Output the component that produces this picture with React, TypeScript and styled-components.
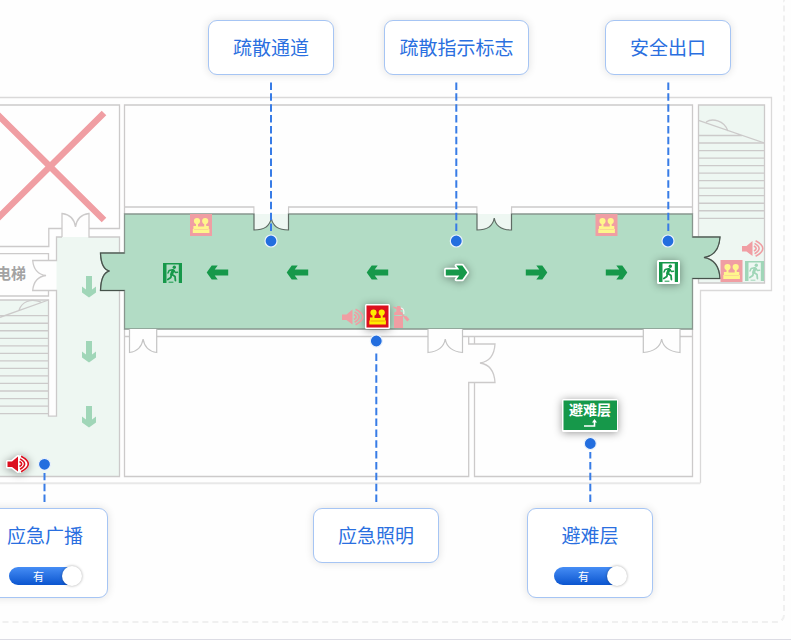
import React, { useState } from "react";
import styled, { createGlobalStyle, css } from "styled-components";

const GlobalStyle = createGlobalStyle`
  *, *::before, *::after { box-sizing: border-box; }
  body {
    margin: 0;
    background: #fefefe;
    font-family: "Noto Sans CJK SC", "Liberation Sans", sans-serif;
  }
`;

const BLUE = "#2a6fe0";
const GREEN = "#16984a";
const WALL = "#cccaca";
const PALE = "#eef7f2";
const PINK = "#f09ea3";
const LEMON = "#fff68c";

const Page = styled.div`
  display: flex;
  flex-direction: column;
  min-height: 100vh;
  overflow: hidden;
  border-bottom: 1px solid #dcdce4;
`;

const Board = styled.main`
  position: relative;
  flex: 1;
  margin: 0 6px 16px 0;
  border: 2px dashed #f0f0f0;
  border-top: none;
  border-left: none;
  border-bottom-right-radius: 8px;
`;

const Plan = styled.svg`
  display: block;
  overflow: visible;
  font-family: "Noto Sans CJK SC", sans-serif;
  font-weight: 700;
`;

const Lifted = styled.g`
  filter: drop-shadow(0 1px 4px rgba(0, 0, 0, 0.4));
`;

const Callout = styled.section<{ $x: number; $y: number; $wide?: boolean }>`
  position: absolute;
  left: ${(p) => p.$x}px;
  top: ${(p) => p.$y}px;
  width: ${(p) => (p.$wide ? 145 : 126)}px;
  display: flex;
  flex-direction: column;
  align-items: center;
  gap: 17px;
  padding: 11px 0 12px;
  border: 1px solid #a6c5f4;
  border-radius: 9px;
  background: #fff;
  box-shadow: 0 0 8px rgba(0, 0, 0, 0.12);
`;

const CalloutTitle = styled.h2`
  margin: 0;
  color: ${BLUE};
  font-size: 19px;
  font-weight: 400;
  line-height: 30px;
  white-space: nowrap;
`;

const Switch = styled.label<{ $on: boolean }>`
  position: relative;
  display: flex;
  align-items: center;
  width: 72px;
  height: 18px;
  padding: 0 24px;
  border-radius: 9px;
  background: linear-gradient(#468df5, #0b55cf);
  color: #fff;
  font-size: 11px;
  line-height: 18px;
  cursor: pointer;
  ${(p) =>
    !p.$on &&
    css`
      justify-content: flex-end;
      background: #b8bfca;
    `}
`;

const SwitchInput = styled.input`
  position: absolute;
  inset: 0;
  width: 100%;
  height: 100%;
  margin: 0;
  opacity: 0;
  cursor: pointer;
`;

const Knob = styled.span<{ $on: boolean }>`
  position: absolute;
  top: -1px;
  ${(p) => (p.$on ? "right: -1px;" : "left: -1px;")}
  width: 20px;
  height: 20px;
  border-radius: 50%;
  background: #fff;
  box-shadow: 0 0 3px rgba(0, 0, 0, 0.35);
  pointer-events: none;
`;

function Toggle({ label }: { label: string }) {
  const [on, setOn] = useState(true);
  return (
    <Switch $on={on}>
      <SwitchInput
        type="checkbox"
        aria-label={label}
        checked={on}
        onChange={(e) => setOn(e.target.checked)}
      />
      {on ? "有" : "无"}
      <Knob $on={on} />
    </Switch>
  );
}

/* Points left, with its tip at the origin. */
const ARROW = "M0 0L5-7H11L8-3H21.5V3H8L11 7H5Z";

function Arrow({ x, y = 272.5, turn = 0, fill = GREEN }: { x: number; y?: number; turn?: number; fill?: string }) {
  return <path d={ARROW} fill={fill} transform={`translate(${x} ${y}) rotate(${turn})`} />;
}

function Lamp({ x, y, bg = PINK, fg = LEMON }: { x: number; y: number; bg?: string; fg?: string }) {
  return (
    <g transform={`translate(${x} ${y})`}>
      <rect width="22" height="22" fill={bg} />
      <g fill={fg}>
        <circle cx="7" cy="7" r="3.1" />
        <circle cx="15.2" cy="7" r="3.1" />
        <path d="M6 9H8V12.5H14.2V9H16.2V12H18.8V15H19.4V19H2.8V15H3.4V12H6Z" />
      </g>
      <path d="M4 15.5H18.4" stroke={bg} strokeWidth="0.5" fill="none" opacity="0.7" />
    </g>
  );
}

function Speaker({ x, y, color = PINK }: { x: number; y: number; color?: string }) {
  return (
    <g transform={`translate(${x} ${y})`}>
      <path d="M0 6H4.5L10.5 1V16L4.5 11.5H0Z" fill={color} />
      <g fill="none" stroke={color} strokeWidth="1.6">
        <path d="M12 6Q16.4 8.5 12 11" />
        <path d="M12.6 3.4Q21.6 8.5 12.6 13.7" />
        <path d="M13.6 .8Q28 8.5 13.6 16.3" />
      </g>
    </g>
  );
}

function ExitSign({ x, y, color = GREEN }: { x: number; y: number; color?: string }) {
  return (
    <g transform={`translate(${x} ${y})`}>
      <path fill={color} d="M0 0H19V20H15.8V1.4H3.5V20H0Z" />
      <circle cx="11.3" cy="4.2" r="1.7" fill={color} />
      <g fill="none" stroke={color} strokeLinejoin="round" strokeLinecap="round">
        <path strokeWidth="3" d="M10 7.6L8.6 11.2" />
        <path strokeWidth="1.5" d="M9.5 6.8L6.2 7.4L5 10M10.8 7.2L12.4 9.6L14.6 9.2" />
        <path strokeWidth="1.8" d="M9 11.5L12 13.5L12.4 17.5M8.4 11.4L7.8 14.6L4.8 16.6" />
        <path strokeWidth="1" d="M6 19.2H10" />
      </g>
    </g>
  );
}

function Extinguisher({ x, y }: { x: number; y: number }) {
  return (
    <g transform={`translate(${x} ${y})`}>
      <path fill={PINK} d="M1 8Q1 5.6 3.4 5.4V3.2L0 1.6L.4 .6L4 1.6V0H7.4V2H10V4H7.4V5.4Q10 5.6 10 8V9H1Z" />
      <path fill={PINK} d="M1 10H10V22H1Z" />
      <path fill="none" stroke={PINK} strokeWidth="1.3" d="M9 8.5L13 12" />
      <path stroke={PINK} strokeWidth="3" d="M12 10.8L15.4 14.6" />
      <path fill="none" stroke={PALE} strokeWidth="1.2" d="M8 2.2Q11.4 2.4 10.8 8" />
    </g>
  );
}

function Treads({ x1, x2, y, count }: { x1: number; x2: number; y: number; count: number }) {
  return (
    <>
      {Array.from({ length: count }, (_, i) => (
        <path key={i} d={`M${x1} ${y + i * 7.53}H${x2}`} />
      ))}
    </>
  );
}

const upperDoor = (l: number, r: number) => {
  const c = (l + r) / 2;
  return `M${l} 214V230Q${c - 2} 230 ${c} 218Q${c + 2} 230 ${r} 230V214`;
};
const lowerDoor = (l: number, r: number) => {
  const c = (l + r) / 2;
  return `M${l} 329V352.5Q${c - 2} 351 ${c} 339Q${c + 2} 351 ${r} 352.5V329`;
};

const HALL =
  "M124.5 214H692.5V237H720Q719 255 704 257.5Q719 260 720 278.5H692.5V329H124.5V290.5H100.5Q101 273 109.5 271Q101 269 100.5 253H124.5Z";

function FloorPlan() {
  return (
    <Plan width="780" height="510" viewBox="0 0 780 510" role="img" aria-label="楼层疏散平面图">
      <path fill={PALE} d="M56.5 237H119.5V476.5H0V300H48.5V416.5H56.5ZM698.5 105H764.5V283H698.5Z" />
      <g fill="none" stroke="#dad9d9" strokeWidth="1.3">
        <path d="M0 97.5H771.5V290.5H700.5V483" />
        <path d="M700.5 483.2H0" stroke="#e8e8e8" strokeWidth="2" />
      </g>
      <g fill="none" stroke={WALL} strokeWidth="1.3">
        <path d="M0 105H119.5V228.5H89M62 228.5H48.8V246.5H0" />
        <path d="M62 237H56.5V260.5H32.7Q34 274 46 275.5Q34 277 32.7 290.5H56.5V416.2H48.5V300H0" />
        <path d="M62 237V213.5Q74 215 75.5 227Q77 215 89 213.5V237H119.5V476.5H0" />
        <path d="M0 253.7H48.5V260.5M48.5 290.5V296H0" />
        <path d="M0 317.3L48.5 300M19 310C22 302 30 298 41 302" />
        <Treads x1={0} x2={48.5} y={315.7} count={14} />
        <path d="M124.5 214V105H692.5V214M124.5 207H254V214M288.5 214V207H477V214M511.5 214V207H692.5" />
        <path d="M124.5 329V476.5H468.7V382.5H495Q494 365 480 363Q494 361 495 344H468.7V336.5" />
        <path d="M474.5 336.5V344M474.5 382.5V476.5H692.5V329" />
        <path d="M124.5 336.5H129.5M156.7 336.5H428M462.5 336.5H643.3M680 336.5H692.5" />
        <path d="M698.5 237V105H764.5V283H698.5V278.5" />
        <path d="M698.5 120.3L764.5 143M698.5 135.5H742M706 122C712 118 724 120 728 131" />
        <Treads x1={698.5} x2={764.5} y={143} count={11} />
      </g>

      <g stroke={PINK} strokeWidth="6.5">
        <path d="M-4 113L104 220M104 113L-4 220" />
      </g>
      <text x="-4" y="279" fontSize="15" fill="#a3a3a3">电梯</text>

      <path d={HALL} fill="#b2dcc5" stroke="#88968e" strokeWidth="1.3" />
      <g fill="none" stroke="#46524b" strokeWidth="1.2">
        <path d="M124.5 253H100.5Q101 269 109.5 271Q101 273 100.5 290.5H124.5" />
        <path d="M692.5 237H720Q719 255 704 257.5Q719 260 720 278.5H692.5" />
      </g>
      <path fill="#fefefe" d="M254.7 206H287.8V214H254.7ZM477.7 206H510.8V214H477.7Z" />
      <g fill={PALE} stroke="#5f6b64" strokeWidth="1.2">
        <path d={upperDoor(254, 288.5)} />
        <path d={upperDoor(477, 511.5)} />
      </g>
      <g fill="#fefefe" stroke="#c4c4c4" strokeWidth="1.2">
        <path d={lowerDoor(129.5, 156.7)} />
        <path d={lowerDoor(428, 462.5)} />
        <path d={lowerDoor(643.3, 680)} />
      </g>

      <Arrow x={89} y={297.5} turn={-90} fill="#a0d6b8" />
      <Arrow x={89} y={362.5} turn={-90} fill="#a0d6b8" />
      <Arrow x={89} y={427.5} turn={-90} fill="#a0d6b8" />
      <Arrow x={206.7} />
      <Arrow x={286.7} />
      <Arrow x={366.7} />
      <Arrow x={547.3} turn={180} />
      <Arrow x={627.3} turn={180} />
      <Lifted>
        <path d={ARROW} transform="translate(467.3 272.5) rotate(180)" fill="#fff" stroke="#fff" strokeWidth="3.4" strokeLinejoin="round" />
        <Arrow x={467.3} turn={180} />
      </Lifted>

      <Lamp x={190} y={214} />
      <Lamp x={595.5} y={214} />
      <Lamp x={720.5} y={260} />
      <Lifted>
        <rect x="365" y="304" width="25" height="25" rx="1.5" fill="#fff" />
      </Lifted>
      <Lamp x={366.5} y={305.5} bg="#dc0f1e" fg="#ffed00" />

      <Speaker x={342} y={308.5} />
      <Speaker x={742} y={240} />
      <Lifted>
        <g stroke="#fff" strokeWidth="3" strokeLinejoin="round" fill="#fff">
          <path d="M7.5 461.5H12L18 456.5V471.5L12 467H7.5Z" />
          <path d="M20.5 456.5Q35 464 20.5 471.5Z" />
        </g>
      </Lifted>
      <Speaker x={7.5} y={455.5} color="#dc0f1e" />
      <Extinguisher x={393} y={306} />

      <ExitSign x={163} y={263} />
      <ExitSign x={745} y={261} color="#a0d6b8" />
      <Lifted>
        <rect x="657" y="260" width="23" height="24" rx="1.5" fill="#fff" />
      </Lifted>
      <ExitSign x={659} y={262} />

      <Lifted>
        <rect x="562" y="399" width="56" height="33" rx="1.5" fill="#fff" />
      </Lifted>
      <rect x="563.5" y="400.5" width="53.5" height="29.5" fill={GREEN} />
      <text x="590" y="415" fontSize="14" fill="#fff" textAnchor="middle">避难层</text>
      <path d="M584 426H594.5V421.5" fill="none" stroke="#fff" strokeWidth="1.6" />
      <path d="M594.5 419L597 422.5H592Z" fill="#fff" />

      <g stroke="#387ce6" strokeWidth="2" strokeDasharray="7.5 3.35">
        <path d="M271 82.5V231M456.3 82.5V231M668.3 82.5V231" />
        <path d="M376.3 502V350M44.5 502V473M590.3 502V452" />
      </g>
      <g fill="#236edf" stroke="#eaf2fc" strokeWidth="1.2">
        <circle cx="271" cy="241" r="6" />
        <circle cx="456.3" cy="241" r="6" />
        <circle cx="668" cy="241" r="6" />
        <circle cx="376.3" cy="341" r="6" />
        <circle cx="44.5" cy="464.3" r="6" />
        <circle cx="590.3" cy="443.5" r="6" />
      </g>
    </Plan>
  );
}

const callouts = [
  { title: "疏散通道", x: 208, y: 20 },
  { title: "疏散指示标志", x: 384, y: 20, wide: true },
  { title: "安全出口", x: 605, y: 20 },
  { title: "应急广播", x: -18, y: 508, toggle: true },
  { title: "应急照明", x: 313, y: 508 },
  { title: "避难层", x: 527, y: 508, toggle: true },
];

export default function App() {
  return (
    <>
      <GlobalStyle />
      <Page>
        <Board>
          <FloorPlan />
          {callouts.map((c) => (
            <Callout key={c.title} $x={c.x} $y={c.y} $wide={c.wide}>
              <CalloutTitle>{c.title}</CalloutTitle>
              {c.toggle && <Toggle label={c.title} />}
            </Callout>
          ))}
        </Board>
      </Page>
    </>
  );
}
